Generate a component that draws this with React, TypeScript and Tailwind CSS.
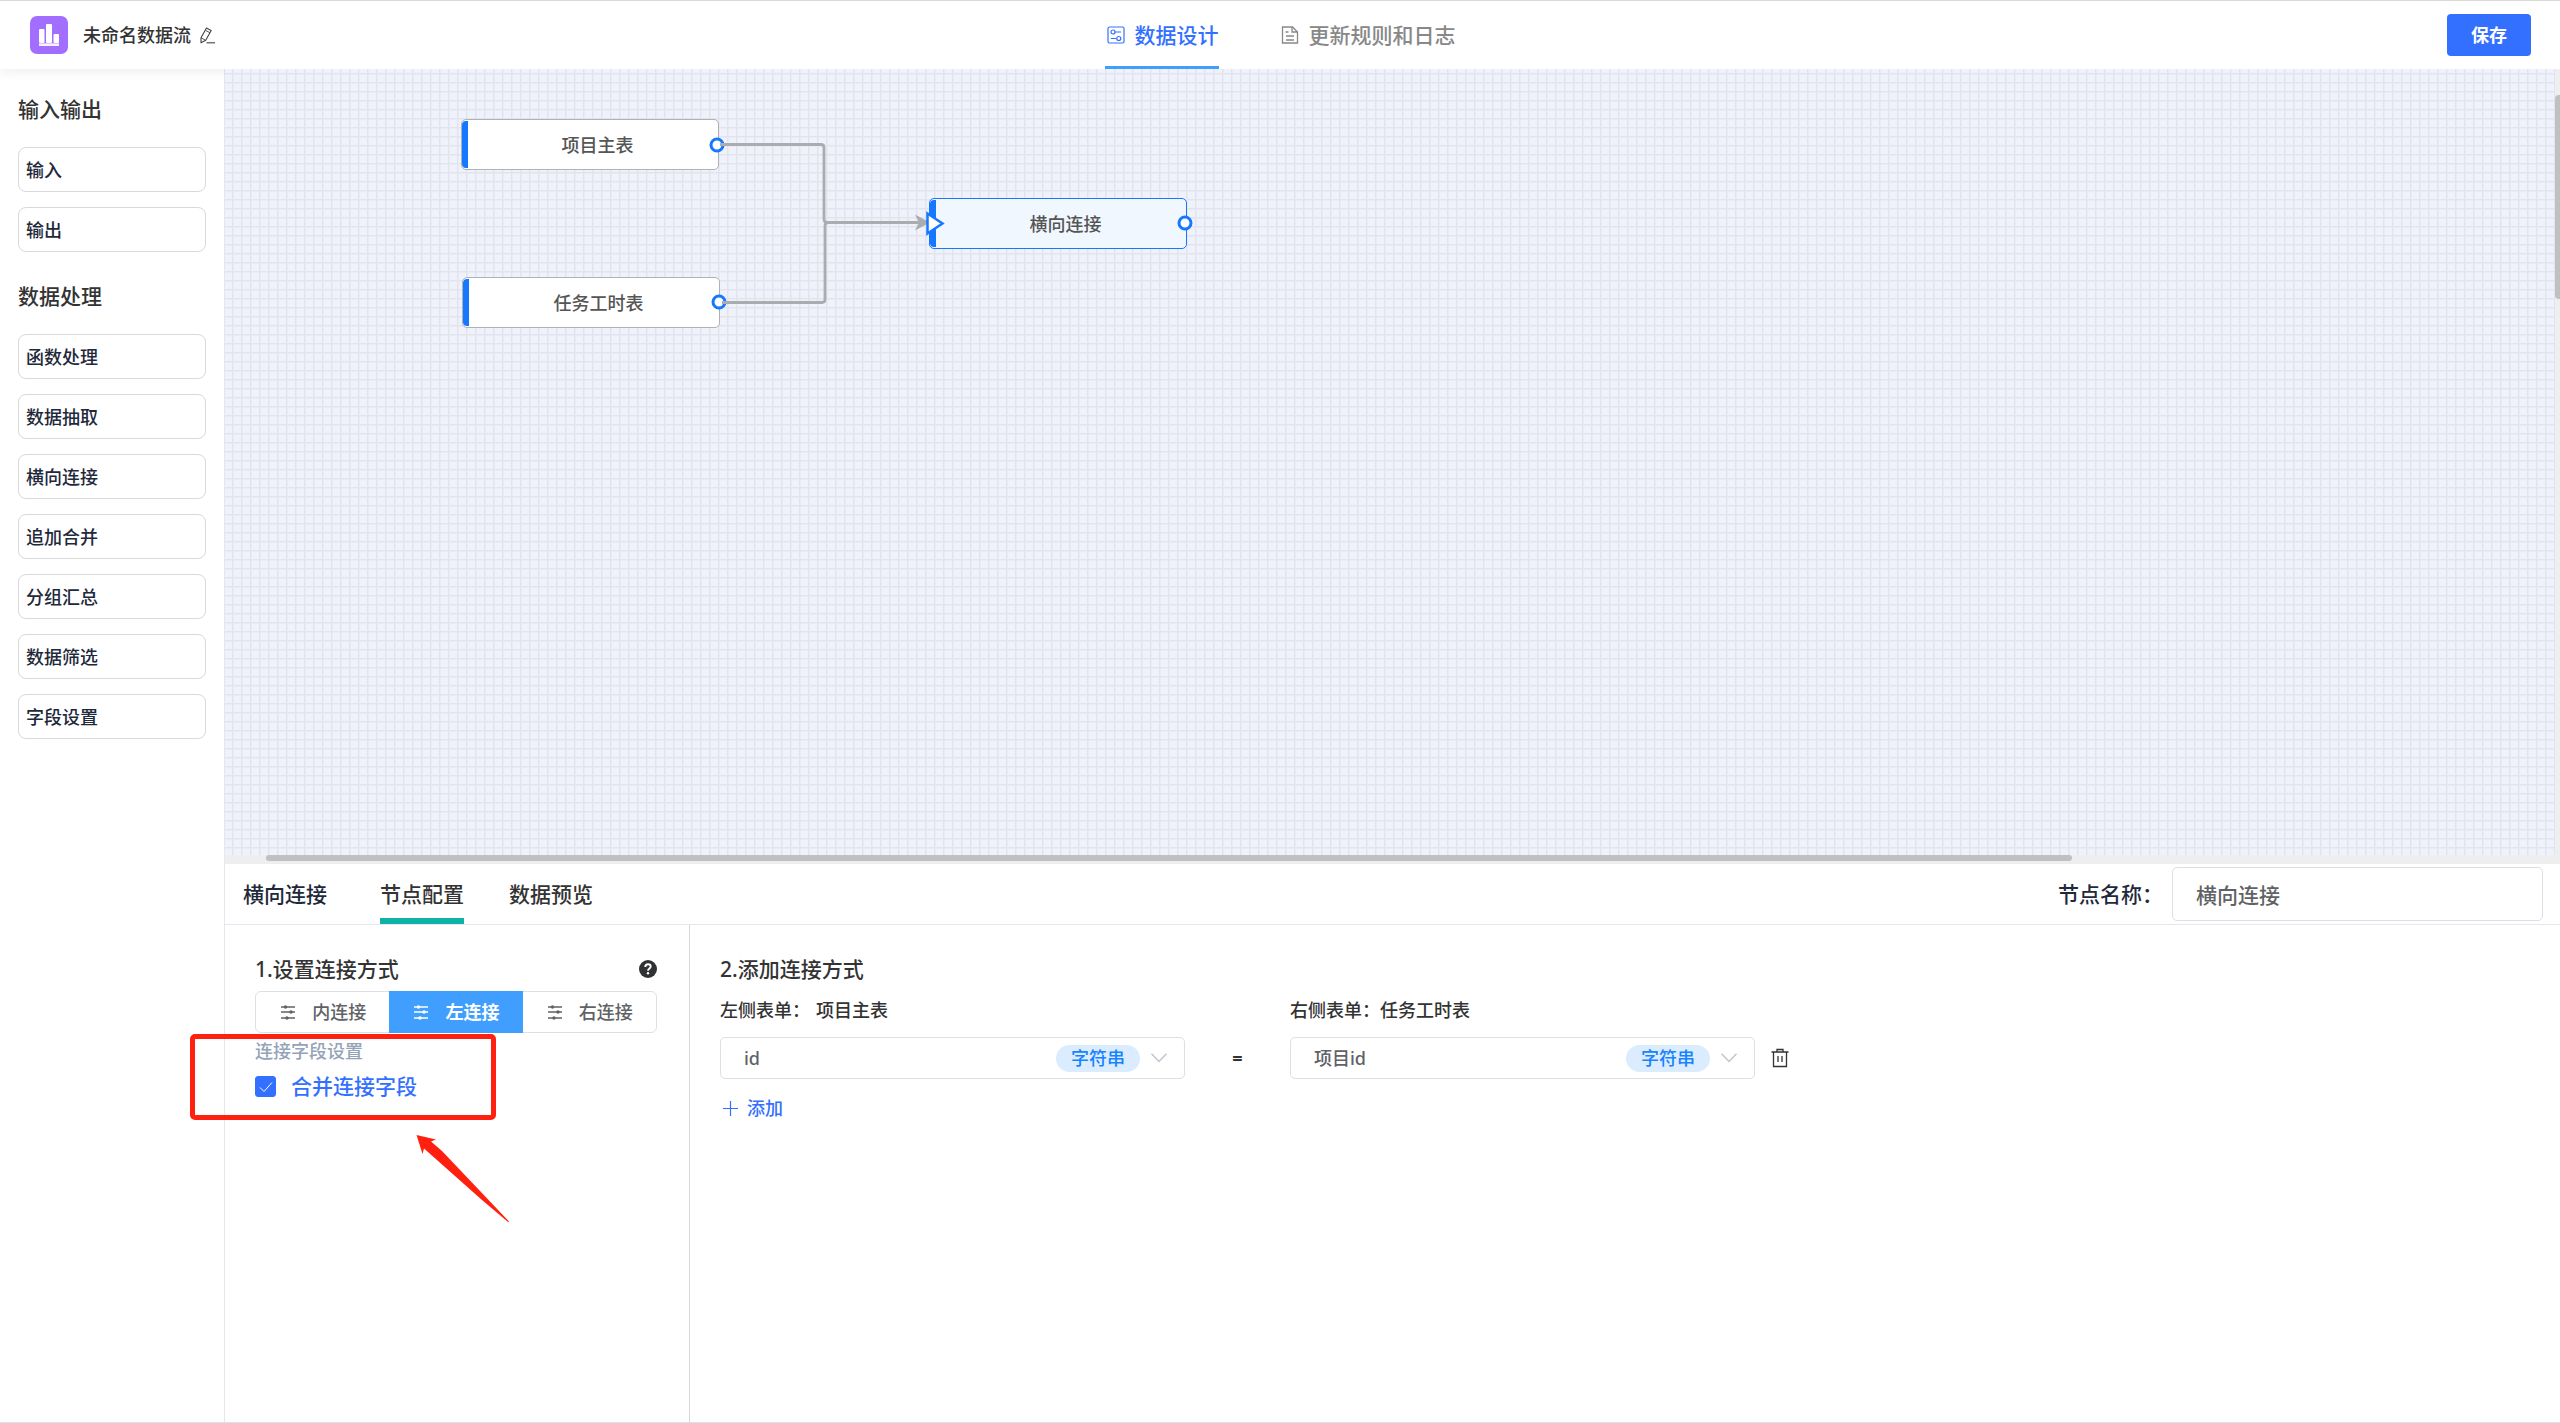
import { useState } from "react";

type Item = { id: string; label: string };
type JoinType = "inner" | "left" | "right";

const ioItems: Item[] = [
  { id: "input", label: "输入" },
  { id: "output", label: "输出" },
];

const processItems: Item[] = [
  { id: "fn", label: "函数处理" },
  { id: "extract", label: "数据抽取" },
  { id: "join", label: "横向连接" },
  { id: "append", label: "追加合并" },
  { id: "group", label: "分组汇总" },
  { id: "filter", label: "数据筛选" },
  { id: "fields", label: "字段设置" },
];

const joinTypes: { value: JoinType; label: string }[] = [
  { value: "inner", label: "内连接" },
  { value: "left", label: "左连接" },
  { value: "right", label: "右连接" },
];

export default function App() {
  return (
    <div className="flex h-screen flex-col overflow-hidden border-t border-b border-t-[#d9d9d9] border-b-[#d5e3ea] bg-white font-['Noto_Sans','Noto_Sans_CJK_SC',sans-serif] text-lg font-medium text-[#333333]">
      <Header />
      <div className="flex min-h-0 flex-1">
        <Sidebar />
        <main className="relative z-20 flex min-w-0 flex-1 flex-col">
          <FlowCanvas />
          <ConfigPanel />
        </main>
      </div>
    </div>
  );
}

function Header() {
  return (
    <header className="relative z-10 grid h-17 shrink-0 grid-cols-[1fr_auto_1fr] items-center bg-white shadow-[0_4px_10px_rgba(0,0,0,0.06)]">
      <div className="flex items-center pl-[30px]">
        <LogoIcon />
        <h1 className="ml-[15px] leading-6">未命名数据流</h1>
        <button aria-label="重命名" className="ml-2">
          <EditIcon />
        </button>
      </div>
      <nav className="flex h-full gap-[60px] text-[21px]">
        <a href="#design" className="flex h-full items-center gap-2.5 border-b-3 border-[#409eff] pt-[3px] text-[#3370ff]">
          <DesignIcon />
          数据设计
        </a>
        <a href="#logs" className="flex h-full items-center gap-2.5 border-b-3 border-transparent pt-[3px] text-[#888888]">
          <DocIcon />
          更新规则和日志
        </a>
      </nav>
      <div className="flex justify-end pr-[29px]">
        <button className="h-[42px] w-[84px] rounded bg-[#3370ff] font-bold text-white">保存</button>
      </div>
    </header>
  );
}

function Sidebar() {
  return (
    <aside className="w-[225px] shrink-0 border-r border-[#e4e7ed] px-[18px] pt-6">
      <SidebarGroup title="输入输出" items={ioItems} />
      <SidebarGroup title="数据处理" items={processItems} />
    </aside>
  );
}

function SidebarGroup({ title, items }: { title: string; items: Item[] }) {
  return (
    <section className="mb-7">
      <h2 className="text-[21px] leading-8">{title}</h2>
      <div className="mt-[22px] flex flex-col gap-[15px]">
        {items.map((item) => (
          <button
            key={item.id}
            className="h-[45px] rounded-lg border border-[#d9d9d9] pl-[7px] text-left text-[#1e293b]"
          >
            {item.label}
          </button>
        ))}
      </div>
    </section>
  );
}

/* ---------- canvas ---------- */

function FlowCanvas() {
  return (
    <section className="relative min-h-0 flex-1 bg-[#eeeeee]">
      <div className="absolute top-0 right-[5px] bottom-[9px] left-0 overflow-hidden bg-[#eff2fb] bg-[linear-gradient(to_right,#e1e4ed_1px,transparent_2px),linear-gradient(to_bottom,#e1e4ed_1px,transparent_2px)] bg-[size:9px_9px] bg-[position:7px_4px]">
        <FlowNode className="top-[50px] left-[236px]" label="项目主表" />
        <FlowNode className="top-[208px] left-[237px]" label="任务工时表" />
        <FlowNode className="top-[129px] left-[704px]" label="横向连接" selected />

        {/* edges and ports */}
        <svg className="absolute top-0 left-0" width="1000" height="300" fill="none">
          <g fill="#fff" stroke="#1677ff" strokeWidth="3">
            <circle cx="492" cy="76" r="6" />
            <circle cx="494" cy="233" r="6" />
            <circle cx="960" cy="154" r="6" />
          </g>
          <g stroke="#a9adb2" strokeWidth="2.8">
            <path d="M495 75.5H596Q599 75.5 599 78.5V150Q599 153.5 602 153.5H695" />
            <path d="M497 233.5H597Q600 233.5 600 230.5V157Q600 153.5 603 153.5H695" />
          </g>
          <path d="M690 145.5L705 153.5L690 161.5L694 153.5Z" fill="#a9adb2" />
          <path d="M702.5 144.5V164.5L717.5 154.5Z" fill="#fff" stroke="#1677ff" strokeWidth="2.5" />
        </svg>
      </div>
      {/* scrollbars */}
      <div className="absolute top-[26px] right-0 h-[204px] w-[5px] rounded-l-sm bg-[#c0c0c0]" />
      <div className="absolute right-[488px] bottom-[3px] left-[41px] h-1.5 rounded-sm bg-[#c0c0c0]" />
    </section>
  );
}

function FlowNode({
  label,
  className,
  selected,
}: {
  label: string;
  className: string;
  selected?: boolean;
}) {
  const tone = selected ? "border-[#1677ff] bg-[#f0f7ff]" : "border-[#aeb1b5] bg-white";
  return (
    <div
      className={`absolute flex h-[51px] w-[258px] items-center justify-center overflow-hidden rounded-[5px] border pl-[15px] text-[#555555] ${tone} ${className}`}
    >
      <span className="absolute top-px bottom-px left-0 w-1.5 rounded-l bg-[#1677ff]" />
      {label}
    </div>
  );
}

/* ---------- bottom panel ---------- */

function ConfigPanel() {
  const [nodeName, setNodeName] = useState("横向连接");

  return (
    <section className="flex h-[558px] shrink-0 flex-col bg-white">
      <div className="flex h-[61px] shrink-0 items-center border-b border-[#e4e7ed] pr-[17px] pl-[18px] text-[21px]">
        <span className="text-[#1e293b]">横向连接</span>
        <div className="ml-[53px] flex h-full gap-[45px]">
          <button className="border-y-6 border-t-transparent border-b-[#0fb3a6]">节点配置</button>
          <button className="border-y-6 border-transparent">数据预览</button>
        </div>
        <label htmlFor="node-name" className="ml-auto text-[#1e293b]">
          节点名称：
        </label>
        <input
          id="node-name"
          value={nodeName}
          onChange={(e) => setNodeName(e.target.value)}
          className="ml-[9px] h-[54px] w-[371px] rounded-[5px] border border-[#dcdfe6] px-[23px] text-[#606266] outline-none"
        />
      </div>
      <div className="flex min-h-0 flex-1">
        <JoinSettings />
        <JoinFields />
      </div>
    </section>
  );
}

function JoinSettings() {
  const [joinType, setJoinType] = useState<JoinType>("left");
  const [merge, setMerge] = useState(true);

  return (
    <div className="w-[465px] shrink-0 border-r border-[#d4d7de] pt-7 pr-8 pl-[30px]">
      <div className="flex h-8 items-center justify-between">
        <h3 className="text-[21px]">1.设置连接方式</h3>
        <HelpIcon />
      </div>
      <div role="radiogroup" className="mt-1.5 flex h-[42px] rounded-md border border-[#dcdfe6]">
        {joinTypes.map((t) => (
          <label
            key={t.value}
            className="-my-px flex flex-1 cursor-pointer items-center justify-center gap-[15px] text-[#606266] has-checked:bg-[#409eff] has-checked:font-bold has-checked:text-white"
          >
            <input
              type="radio"
              name="join-type"
              className="sr-only"
              checked={joinType === t.value}
              onChange={() => setJoinType(t.value)}
            />
            <SlidersIcon />
            {t.label}
          </label>
        ))}
      </div>

      <div className="relative pt-1.5">
        <p className="leading-6 text-[#94a3b8]">连接字段设置</p>
        <label className="mt-[7px] flex h-8 w-fit items-center gap-[15px] text-[21px] text-[#3370ff]">
          <span className="relative size-[21px]">
            <input
              type="checkbox"
              checked={merge}
              onChange={(e) => setMerge(e.target.checked)}
              className="block size-full appearance-none rounded-[3px] border border-[#3370ff] checked:bg-[#3370ff]"
            />
            <svg className="pointer-events-none absolute inset-0" width="21" height="21" fill="none" stroke="#fff" strokeWidth="1">
              <path d="M5 11.5L9 15.500L17 6.500" />
            </svg>
          </span>
          合并连接字段
        </label>
        {/* callout */}
        <div className="pointer-events-none absolute top-px -left-[65px] h-[86px] w-[306px] rounded-[5px] border-5 border-[#ff2010]" />
        <svg className="pointer-events-none absolute top-[102px] left-[161px]" width="94" height="88" fill="#ff2010">
          <path d="M0.500 0L20 4.500L15 6.500L26 16L93 86.500L92 87L66 65L8 13.500L6.500 19Z" />
        </svg>
      </div>
    </div>
  );
}

function JoinFields() {
  return (
    <div className="flex-1 pt-7 pl-[30px]">
      <h3 className="text-[21px] leading-8">2.添加连接方式</h3>
      <div className="mt-[13px] flex items-end">
        <FieldSelect id="left-field" label="左侧表单：" table="项目主表" value="id" spaced />
        <span className="flex h-[42px] w-[105px] items-center justify-center font-bold">=</span>
        <FieldSelect id="right-field" label="右侧表单：" table="任务工时表" value="项目id" />
        <button aria-label="删除" className="ml-[15px] flex h-[42px] items-center">
          <TrashIcon />
        </button>
      </div>
      <button className="mt-[17px] flex h-6 items-center gap-[9px] pl-[3px] text-[#3370ff]">
        <svg width="15" height="15" stroke="currentColor" strokeWidth="1.2">
          <path d="M0 7.500H15M7.500 0V15" />
        </svg>
        添加
      </button>
    </div>
  );
}

function FieldSelect({
  id,
  label,
  table,
  value,
  spaced,
}: {
  id: string;
  label: string;
  table: string;
  value: string;
  spaced?: boolean;
}) {
  return (
    <div className="w-[465px]">
      <label htmlFor={id} className="flex leading-6">
        {label}
        <span className={spaced ? "ml-1.5" : ""}>{table}</span>
      </label>
      <div className="relative mt-[15px]">
        <select
          id={id}
          defaultValue={value}
          className="block h-[42px] w-full appearance-none rounded-[5px] border border-[#dcdfe6] bg-white pl-[23px] text-[#606266]"
        >
          <option>{value}</option>
        </select>
        <div className="pointer-events-none absolute inset-y-0 right-[18px] flex items-center gap-[11px]">
          <span className="flex h-[27px] w-[84px] items-center justify-center rounded-full bg-[#dbecff] text-[#1683ff]">
            字符串
          </span>
          <svg width="16" height="10" fill="none" stroke="#c0c4cc" strokeWidth="1.5">
            <path d="M0.500 0.800L8 8.500L15.500 0.800" />
          </svg>
        </div>
      </div>
    </div>
  );
}

/* ---------- icons ---------- */

function LogoIcon() {
  return (
    <svg width="38" height="38" viewBox="0 0 38 38" fill="#fff">
      <rect width="38" height="38" rx="7" fill="#a26eff" />
      <rect x="9" y="13" width="5.500" height="14" rx="1" />
      <rect x="16" y="8" width="6" height="19" rx="1" />
      <rect x="23.500" y="18" width="5.500" height="9" rx="1" />
      <rect x="9" y="27" width="20" height="1" opacity="0.6" />
      <rect x="9" y="28" width="20" height="2" opacity="0.9" />
    </svg>
  );
}

function EditIcon() {
  return (
    <svg width="17" height="17" viewBox="0 0 17 17" fill="none" stroke="#444" strokeWidth="1.1" strokeLinejoin="round">
      <path d="M7.500 1L12.200 3.400L6.700 13.300L2 15.800L2 10.800Z" />
      <path d="M6.300 3.300L11 5.700M2 10.800L6.700 13.300" strokeWidth="0.9" />
      <path d="M7.500 15.800H16" />
    </svg>
  );
}

function DesignIcon() {
  return (
    <svg width="20" height="18" viewBox="-2 0 20 18" fill="none" stroke="currentColor" strokeWidth="1.2">
      <rect x="1" y="1" width="16" height="16" rx="1.5" />
      <circle cx="6" cy="6" r="2" />
      <path d="M8 6H14M3.800 12.500H9.500" />
      <circle cx="11.8" cy="12.5" r="2" />
    </svg>
  );
}

function DocIcon() {
  return (
    <svg width="20" height="18" viewBox="-2 0 20 18" fill="none" stroke="currentColor" strokeWidth="1.3">
      <path d="M1.500 1H11.500L16.500 6V17H1.500Z" />
      <path d="M11 1V6H16.500M4.500 6H7.500M5 10H13M5 14H13" />
    </svg>
  );
}

function HelpIcon() {
  return (
    <svg width="18" height="18" viewBox="0 0 18 18" fill="none">
      <circle cx="9" cy="9" r="9" fill="#303133" />
      <path d="M6.300 7C6.300 5.200 7.500 4.300 9 4.300C10.600 4.300 11.700 5.300 11.700 6.600C11.700 8.500 9 8.500 9 10.800" stroke="#fff" strokeWidth="1.9" />
      <circle cx="9" cy="13.3" r="1.2" fill="#fff" />
    </svg>
  );
}

function SlidersIcon() {
  return (
    <svg width="18" height="18" viewBox="0 0 18 18" fill="currentColor" stroke="currentColor" strokeWidth="1.4">
      <path d="M2 4H16M2 9H16M2 15H16" />
      <circle cx="6.5" cy="4" r="1.7" stroke="none" />
      <circle cx="12" cy="9" r="1.7" stroke="none" />
      <circle cx="8" cy="15" r="1.7" stroke="none" />
    </svg>
  );
}

function TrashIcon() {
  return (
    <svg width="20" height="20" viewBox="0 0 20 20" fill="none" stroke="#333" strokeWidth="1.3">
      <path d="M1.500 4H18.500M3.500 4V18.500H16.500V4M7 4V1.500H13V4M8 8V14M12 8V14" />
    </svg>
  );
}
